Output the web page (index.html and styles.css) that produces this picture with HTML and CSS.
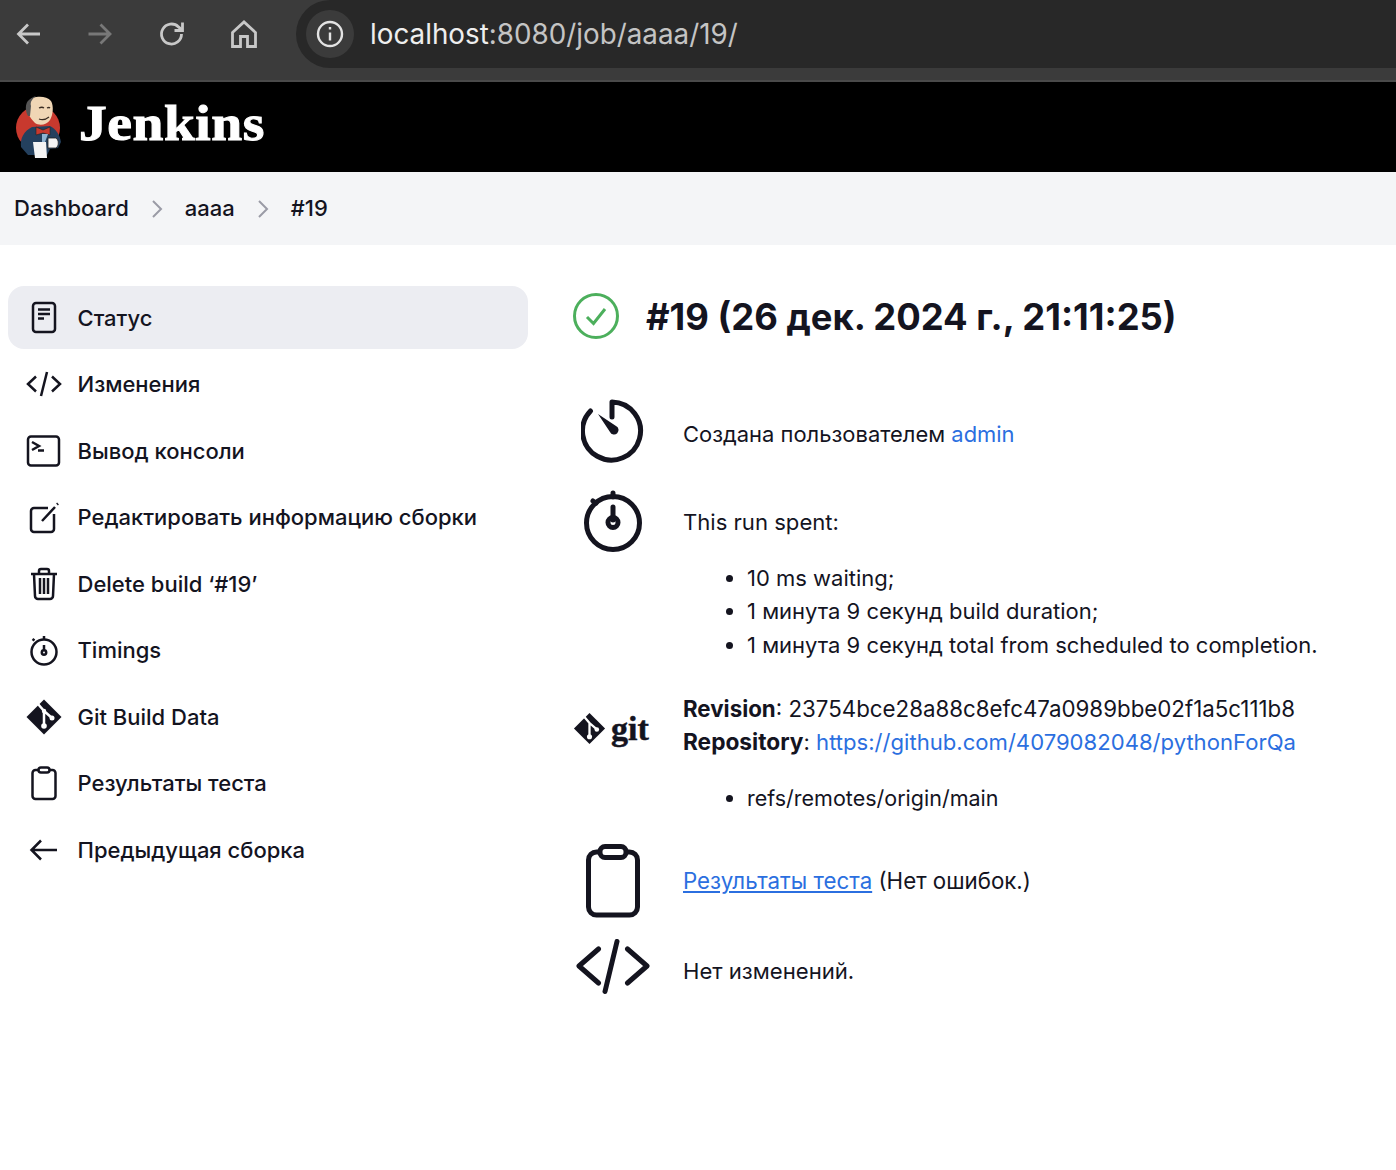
FILE: index.html
```html
<!DOCTYPE html>
<html>
<head>
    <meta charset="UTF-8">
    <title>aaaa #19 - Jenkins</title>
    <link rel="stylesheet" href="styles.css">
</head>
<body>
    <div class="browser-bar">
        <div class="nav-buttons">
            <svg class="nav-icon" viewBox="0 0 28 28"><path d="M25 14H4M13 4.500L3.500 14l9.500 9.500"/></svg>
            <svg class="nav-icon nav-off" viewBox="0 0 28 28"><path d="M1.500 14h21M13.500 4.500l9.500 9.500-9.500 9.500"/></svg>
            <svg class="nav-icon" viewBox="0 0 28 28"><path d="M23.500 14a10 10 0 1 1-3-7.100L24 10"/><path d="M24.500 2.500V10.500H16.500"/></svg>
            <svg class="nav-icon" viewBox="0 0 28 28"><path d="M2.500 12.500L14 2l11.500 10.500V26.500h-8v-10h-7v10h-8z"/></svg>
        </div>
        <div class="address-bar">
            <span class="site-info">
                <svg viewBox="0 0 28 28" width="28" height="28"><circle cx="14" cy="14" r="12"/><path d="M14 12.500v8M14 7v2.500"/></svg>
            </span>
            <span class="address-text">localhost<span class="address-rest">:8080/job/aaaa/19/</span></span>
        </div>
    </div>

    <div class="page-header">
        <svg class="logo" viewBox="0 0 48 64" width="48" height="64">
            <circle cx="24" cy="33" r="22" fill="#c8392e"/>
            <path d="M7 52c-1-9 3-16 11-20l18-1c6 3 10 9 11 16l-3 6-8 1-3 6H14z" fill="#24405e"/>
            <path d="M15 6C18 1 32 0 37 6c3 5 2 14-1 19-3 5-11 6-15 3-3-3-5-6-6-8-3-1-3-9 0-14z" fill="#f0d6b5"/>
            <path d="M14 21c-3-5-3-13 1-16 2-2 4-3 7-4-4 3-6 6-5 10l-1 10z" fill="#555"/>
            <path d="M25 13q3-1.500 5 0M33 13q2-1 3 0M25 24q5 2 10-2" fill="none" stroke="#3a2c22" stroke-width="1.300"/>
            <path d="M22 32l7 3 7-3v8l-7-2-7 2z" fill="#c8392e" stroke="#222" stroke-width=".6"/>
            <path d="M28 39h6l-3 8-3 1z" fill="#8fb3d1"/>
            <path d="M19 47h13l1 16H21z" fill="#f4f4f4"/>
            <path d="M34 43h8c3 2 3 8 0 10h-8z" fill="#f4f4f4" stroke="#222" stroke-width=".8"/>
        </svg>
        <span class="brand">Jenkins</span>
    </div>

    <div class="breadcrumbs">
        <span class="crumb">Dashboard</span>
        <svg class="crumb-sep" viewBox="0 0 12 20"><path d="M2 2l8 8-8 8"/></svg>
        <span class="crumb">aaaa</span>
        <svg class="crumb-sep" viewBox="0 0 12 20"><path d="M2 2l8 8-8 8"/></svg>
        <span class="crumb">#19</span>
    </div>

    <div class="page-body">
        <div class="side-panel">
            <div class="task task-active">
                <svg class="task-icon" viewBox="0 0 36 36"><rect x="7" y="3" width="22" height="29" rx="3"/><path d="M12 9.500h12M12 14h12M12 18.500h6"/></svg>
                <span>Статус</span>
            </div>
            <div class="task">
                <svg class="task-icon" viewBox="0 0 36 36"><path d="M10 10.500L2 18l8 7.500M26 10.500l8 7.500-8 7.500M21 6l-6 24"/></svg>
                <span>Изменения</span>
            </div>
            <div class="task">
                <svg class="task-icon" viewBox="0 0 36 36"><rect x="2" y="3.500" width="31" height="29" rx="3"/><path d="M6 9l7 4-7 4M12 17.500h6"/></svg>
                <span>Вывод консоли</span>
            </div>
            <div class="task">
                <svg class="task-icon" viewBox="0 0 36 36"><path d="M22 9H8a3 3 0 0 0-3 3v18a3 3 0 0 0 3 3h17a3 3 0 0 0 3-3V15M16 22L29 8M31 5.500l1-1"/></svg>
                <span>Редактировать информацию сборки</span>
            </div>
            <div class="task">
                <svg class="task-icon" viewBox="0 0 36 36"><path d="M5 8h26M13 8V5a2 2 0 0 1 2-2h6a2 2 0 0 1 2 2v3M8 8l1 22a3 3 0 0 0 3 3h12a3 3 0 0 0 3-3l1-22M14 12v16M18 12v16M22 12v16"/></svg>
                <span>Delete build ‘#19’</span>
            </div>
            <div class="task">
                <svg class="task-icon" viewBox="0 0 36 36"><circle cx="18" cy="20" r="12.500"/><path d="M18 7V4M8.500 8.500l-2-1.500M18 13v5"/><circle cx="18" cy="20.500" r="2.200"/></svg>
                <span>Timings</span>
            </div>
            <div class="task">
                <svg class="task-icon task-filled" viewBox="0 0 36 36">
                    <path d="M18 0.500L35.500 18 18 35.500 0.500 18z"/>
                    <path class="git-branch" d="M12 5l6 7v15M18 12l8 7" fill="none"/>
                    <circle class="git-dot" cx="18" cy="27" r="2.800"/><circle class="git-dot" cx="26" cy="19" r="2.500"/><circle class="git-dot" cx="18" cy="12" r="2.200"/>
                </svg>
                <span>Git Build Data</span>
            </div>
            <div class="task">
                <svg class="task-icon" viewBox="0 0 36 36"><rect x="6.500" y="5" width="23" height="29" rx="3"/><rect x="12.500" y="2.500" width="11" height="5" rx="2.500" fill="#fff"/></svg>
                <span>Результаты теста</span>
            </div>
            <div class="task">
                <svg class="task-icon" viewBox="0 0 36 36"><path d="M31 18H6M15 8.500L5.500 18l9.500 9.500"/></svg>
                <span>Предыдущая сборка</span>
            </div>
        </div>

        <div class="main-panel">
            <h1 class="build-title">
                <svg class="status-icon" viewBox="0 0 46 46" width="46" height="46"><circle cx="23" cy="23" r="21.500"/><path d="M14 24l6.500 6.500L32 16"/></svg>
                <span>#19 (26 дек. 2024 г., 21:11:25)</span>
            </h1>

            <div class="summary summary-user">
                <div class="summary-icon">
                    <svg viewBox="0 0 64 64" width="64" height="64"><path d="M31 18V3a29 29 0 1 1-21.500 9"/><path class="filled" d="M17 15l18 12a4.500 4.500 0 1 1-6 6z"/></svg>
                </div>
                <div class="summary-text">Создана пользователем <a href="#" class="plain-link">admin</a></div>
            </div>

            <div class="summary summary-time">
                <div class="summary-icon">
                    <svg viewBox="0 0 64 64" width="64" height="64"><circle cx="32" cy="33" r="26.500"/><path d="M32 3v4M12 11l3 2M32 17v13"/><circle cx="32" cy="32.500" r="5"/></svg>
                </div>
                <div class="summary-text">
                    <p class="time-lead">This run spent:</p>
                    <ul class="time-list">
                        <li>10 ms waiting;</li>
                        <li>1 минута 9 секунд build duration;</li>
                        <li>1 минута 9 секунд total from scheduled to completion.</li>
                    </ul>
                </div>
            </div>

            <div class="summary summary-git">
                <div class="summary-icon git-mark">
                    <svg viewBox="0 0 36 36" width="33" height="33">
                        <path class="filled" d="M18 1L35 18 18 35 1 18z"/>
                        <path class="git-branch" d="M12 5l6 7v15M18 12l8 7" fill="none"/>
                        <circle class="git-dot" cx="18" cy="27" r="2.800"/><circle class="git-dot" cx="26" cy="19" r="2.500"/>
                    </svg>
                    <span class="git-word">git</span>
                </div>
                <div class="summary-text">
                    <div class="revision-line"><b>Revision</b>: 23754bce28a88c8efc47a0989bbe02f1a5c111b8</div>
                    <div class="repo-line"><b>Repository</b>: <a href="#" class="plain-link">https://github.com/4079082048/pythonForQa</a></div>
                    <ul class="branch-list">
                        <li>refs/remotes/origin/main</li>
                    </ul>
                </div>
            </div>

            <div class="summary summary-tests">
                <div class="summary-icon">
                    <svg viewBox="0 0 64 76" width="64" height="76"><rect x="7.500" y="9" width="49" height="63" rx="8"/><rect x="19" y="3.500" width="26" height="11" rx="5" fill="#fff"/></svg>
                </div>
                <div class="summary-text"><a href="#">Результаты теста</a> (Нет ошибок.)</div>
            </div>

            <div class="summary summary-changes">
                <div class="summary-icon">
                    <svg viewBox="0 0 76 56" width="76" height="56"><path d="M23.500 10L4 27l19.500 17M52.500 10L72 27 52.500 44M42 2.500L30 52.500"/></svg>
                </div>
                <div class="summary-text">Нет изменений.</div>
            </div>
        </div>
    </div>
</body>
</html>
```

FILE: styles.css
```css
body {
    font-family: Inter, "Noto Sans", sans-serif;
    font-size: 22px;
    line-height: 33.6px;
    color: #14141f;
    margin: 0;
    padding: 0;
    background-color: white;
}
.browser-bar {
    display: flex;
    height: 80px;
    background-color: #3b3b3b;
    border-bottom: 2px solid #4a4a4a;
}
.nav-buttons {
    display: flex;
    gap: 43.500px;
    width: 296px;
    height: 68px;
    padding-left: 15px;
    box-sizing: border-box;
    align-items: center;
}
.nav-icon {
    width: 28px;
    height: 28px;
    fill: none;
    stroke: #c8c8c8;
    stroke-width: 2.800;
}
.nav-off {
    stroke: #787878;
}
.address-bar {
    flex: 1;
    display: flex;
    align-items: center;
    height: 68px;
    background-color: #282828;
    border-radius: 34px 0 0 34px;
    padding-left: 10px;
}
.site-info {
    display: flex;
    align-items: center;
    justify-content: center;
    width: 48px;
    height: 48px;
    border-radius: 50%;
    background-color: #3b3b3b;
}
.site-info svg {
    fill: none;
    stroke: #e3e3e3;
    stroke-width: 2.400;
}
.address-text {
    margin-left: 16px;
    padding-top: 2px;
    font-size: 27.800px;
    color: #eeeeee;
}
.address-rest {
    color: #c4c4c4;
}
.page-header {
    display: flex;
    align-items: center;
    height: 90px;
    background-color: black;
    padding-left: 14px;
}
.logo {
    flex: none;
}
.brand {
    display: inline-block;
    margin: 0 0 6px 17px;
    font-family: "Liberation Serif", serif;
    font-weight: bold;
    font-size: 50px;
    letter-spacing: 0.5px;
    -webkit-text-stroke: 1px white;
    color: white;
    transform: scaleX(1.11);
    transform-origin: left center;
}
.breadcrumbs {
    display: flex;
    align-items: center;
    height: 73px;
    padding-left: 14px;
    background-color: #f4f5f7;
}
.crumb {
    font-weight: 500;
}
.crumb-sep {
    width: 12px;
    height: 20px;
    margin: 0 22px 0 22px;
    fill: none;
    stroke: #9a9ba6;
    stroke-width: 2;
}
.page-body {
    display: flex;
    padding: 41px 0 0 8px;
}
.side-panel {
    flex: none;
    width: 520px;
    display: flex;
    flex-direction: column;
    gap: 3.500px;
}
.task {
    display: flex;
    align-items: center;
    height: 63px;
    padding-left: 17.500px;
    border-radius: 16px;
    font-weight: 450;
}
.task span {
    padding-top: 2px;
}
.task-active {
    background-color: #ecedf2;
}
.task-icon {
    flex: none;
    width: 36px;
    height: 36px;
    margin-right: 16px;
    fill: none;
    stroke: #14141f;
    stroke-width: 2.500;
}
.task-filled {
    fill: #14141f;
    stroke: none;
}
.git-branch {
    stroke: white;
    stroke-width: 2.500;
}
.git-dot {
    fill: white;
    stroke: none;
}
.main-panel {
    margin-left: 45px;
    flex: 1;
}
.build-title {
    display: flex;
    align-items: center;
    gap: 27px;
    height: 60px;
    margin: 0 0 51px;
    font-size: 36.400px;
    line-height: 60px;
    font-weight: 700;
}
.build-title span {
    padding-top: 2px;
}
.status-icon {
    flex: none;
    fill: none;
    stroke: #4caf5c;
    stroke-width: 3;
}
.summary {
    display: flex;
    gap: 30px;
}
.summary-text {
    font-size: 22.100px;
}
.summary-icon {
    flex: none;
    width: 80px;
    display: flex;
    justify-content: center;
    align-items: center;
}
.summary-icon svg {
    flex: none;
    fill: none;
    stroke: #14141f;
    stroke-width: 5;
    stroke-linecap: round;
    stroke-linejoin: round;
}
.summary-icon svg .filled {
    fill: #14141f;
    stroke: none;
}
.summary-icon svg .git-branch {
    stroke: white;
    stroke-width: 2.500;
}
.summary-icon svg .git-dot {
    fill: white;
    stroke: none;
}
.summary-user {
    height: 67px;
    align-items: center;
}
.summary-user .summary-text {
    padding-top: 8px;
    font-size: 21.950px;
}
.summary-time {
    margin-top: 26px;
    align-items: flex-start;
}
.time-lead {
    margin: 16px 0 22px;
}
.time-list {
    font-size: 22px;
}
.summary-git {
    margin-top: 30px;
    align-items: flex-start;
}
.revision-line {
    font-size: 22.300px;
}
.repo-line {
    height: 33.600px;
}
.repo-line b {
    font-size: 22.700px;
    line-height: 1;
}
.git-mark {
    height: 72px;
    justify-content: flex-start;
    gap: 5px;
}
.git-word {
    font-family: "Liberation Serif", serif;
    font-weight: bold;
    font-size: 34px;
    -webkit-text-stroke: 0.5px #14141f;
}
ul {
    margin: 0;
    padding-left: 64px;
}
.branch-list {
    margin-top: 22px;
    font-size: 21.500px;
}
.summary-tests {
    margin-top: 28px;
    align-items: center;
    height: 76px;
}
.summary-tests .summary-text {
    font-size: 22.300px;
}
.summary-changes {
    margin-top: 20px;
    align-items: center;
    height: 56px;
}
.summary-changes .summary-text {
    padding-top: 10px;
}
a {
    color: #2b6fe0;
}
.plain-link {
    text-decoration: none;
}
```
